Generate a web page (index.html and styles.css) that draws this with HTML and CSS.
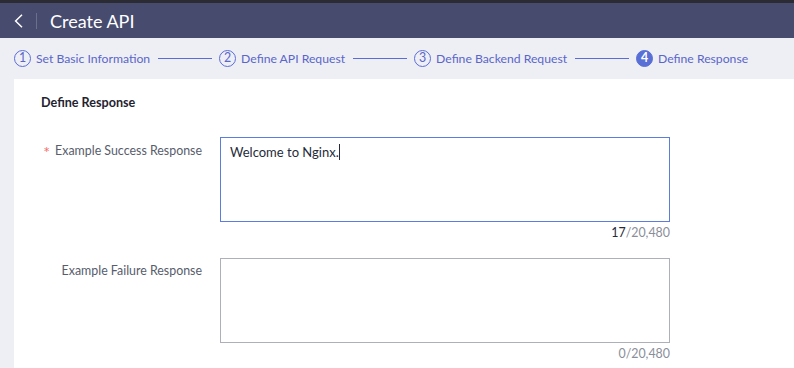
FILE: index.html
```html
<!DOCTYPE html>
<html>
<head>
<meta charset="utf-8">
<link rel="stylesheet" href="styles.css">
</head>
<body>
<div class="topstrip"></div>
<header class="header">
  <span class="back"><svg width="9" height="14" viewBox="0 0 9 14"><path d="M8 0.8 L1.6 7 L8 13.2" fill="none" stroke="#ffffff" stroke-width="1.5"/></svg></span>
  <span class="divider"></span>
  <h1 class="title">Create API</h1>
</header>
<nav class="steps">
  <div class="step"><span class="num">1</span><span class="label">Set Basic Information</span></div>
  <span class="line"></span>
  <div class="step"><span class="num">2</span><span class="label">Define API Request</span></div>
  <span class="line"></span>
  <div class="step"><span class="num">3</span><span class="label">Define Backend Request</span></div>
  <span class="line"></span>
  <div class="step active"><span class="num">4</span><span class="label">Define Response</span></div>
</nav>
<main class="panel">
  <h2 class="section-title">Define Response</h2>
  <div class="row">
    <label class="flabel"><span class="req">*</span>Example Success Response</label>
    <div class="field">
      <div class="textarea focused">Welcome to Nginx.<span class="caret"></span></div>
      <div class="count"><b>17</b>/20,480</div>
    </div>
  </div>
  <div class="row second">
    <label class="flabel">Example Failure Response</label>
    <div class="field">
      <div class="textarea"></div>
      <div class="count">0/20,480</div>
    </div>
  </div>
</main>
</body>
</html>
```
FILE: styles.css
```css
* { box-sizing: border-box; }
html, body { margin: 0; padding: 0; }
body {
  width: 794px;
  height: 368px;
  overflow: hidden;
  background: #eeeff5;
  font-family: Lato, "Noto Sans", sans-serif;
  white-space: nowrap;
}
.topstrip { height: 3px; background: #2a2b33; }
.header {
  height: 35px;
  background: #474b6e;
  display: flex;
  align-items: center;
  padding-left: 14px;
}
.back { display: flex; width: 9px; height: 14px; }
.divider { width: 1px; height: 16px; background: #6b6f8e; margin-left: 13px; }
.title {
  margin: 0 0 0 13px;
  color: #ffffff;
  font-size: 18px;
  font-weight: 400;
  line-height: 20px;
}
.steps {
  height: 41px;
  display: flex;
  align-items: center;
  padding-left: 14px;
  color: #5a66c8;
  font-size: 12.2px;
}
.step { display: flex; align-items: center; }
.num {
  width: 17px; height: 17px;
  border: 1px solid #5b6cd8;
  border-radius: 50%;
  display: flex; align-items: center; justify-content: center;
  font-size: 12.4px;
  margin-right: 5px;
  line-height: 1;
}
.step.active .num { background: #5a6fd6; color: #fff; font-weight: 700; border-color: #5a6fd6; }
.line { width: 54px; height: 1px; background: #5b6cd8; margin: 0 7px 0 8px; }
.panel {
  margin-left: 14px;
  background: #ffffff;
  height: 289px;
  padding: 15px 0 0 27px;
}
.section-title {
  margin: 0;
  font-size: 12.6px;
  font-weight: 700;
  color: #1f2330;
  line-height: 18px;
}
.row { display: flex; margin-top: 25px; }
.row.second { margin-top: 16px; }
.flabel {
  width: 179px;
  text-align: right;
  font-size: 12.4px;
  color: #575d6c;
  line-height: 18px;
  padding-top: 5px;
  padding-right: 18px;
}
.row.second .flabel { padding-top: 4px; }
.req { color: #f66f6a; margin-right: 5px; font-size: 16px; vertical-align: -3px; line-height: 10px; }
.field { width: 450px; }
.textarea {
  height: 85px;
  border: 1px solid #adb0b8;
  padding: 5px 9px;
  font-size: 13px;
  line-height: 18px;
  color: #252b3a;
}
.textarea.focused { border-color: #5e7ce0; }
.caret { display: inline-block; width: 1px; height: 16px; background: #252b3a; vertical-align: -3px; }
.count {
  text-align: right;
  font-size: 12.4px;
  color: #8a8e99;
  line-height: 18px;
  margin-top: 2px;
}
.count b { font-weight: 400; color: #252b3a; }
```
